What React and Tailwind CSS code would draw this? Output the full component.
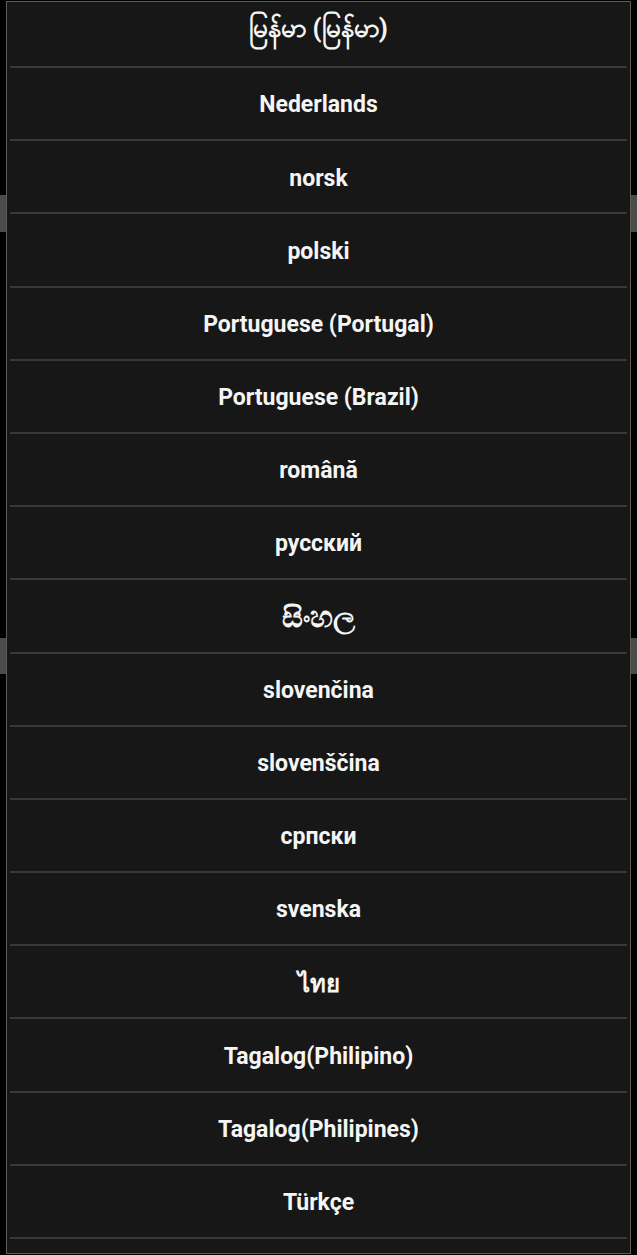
import React from 'react';

const languages = [
  { name: 'မြန်မာ (မြန်မာ)', size: 'text-[26px] pb-1' },
  { name: 'Nederlands' },
  { name: 'norsk' },
  { name: 'polski' },
  { name: 'Portuguese (Portugal)' },
  { name: 'Portuguese (Brazil)' },
  { name: 'română' },
  { name: 'русский' },
  { name: 'සිංහල', size: 'text-[29px] pt-1' },
  { name: 'slovenčina' },
  { name: 'slovenščina' },
  { name: 'српски' },
  { name: 'svenska' },
  { name: 'ไทย', size: 'text-[24px] pt-1' },
  { name: 'Tagalog(Philipino)' },
  { name: 'Tagalog(Philipines)' },
  { name: 'Türkçe' },
];

const App = () => {
  return (
    <div className="relative h-[1255px] w-full overflow-hidden bg-black">
      {/* page behind the picker */}
      <div className="flex flex-col pt-[195px]">
        <div className="h-[37px] w-full bg-[#4b4b4b]" />
        <div className="mt-[406px] h-[36px] w-full bg-[#4b4b4b]" />
      </div>

      {/* language picker */}
      <div className="absolute left-[6px] top-px h-[1253px] w-[625px] overflow-hidden border border-[#5e5c57] bg-[#171717]">
        <div className="-mt-[7.2px] flex flex-col">
          {languages.map((lang, i) => (
            <div key={lang.name}>
              {i > 0 && <div className="mx-[3px] h-[2px] bg-[#3a3831]" />}
              <div
                className={`flex h-[71.19px] items-center justify-center font-bold text-[#f5f5f5] ${lang.size || 'text-[23px] pt-1'}`}
                style={{ fontFamily: 'Roboto, "Noto Sans", "DejaVu Sans", sans-serif' }}
              >
                {lang.name}
              </div>
            </div>
          ))}
          <div className="mx-[3px] h-[2px] bg-[#3a3831]" />
        </div>
      </div>
    </div>
  );
};

export default App;
